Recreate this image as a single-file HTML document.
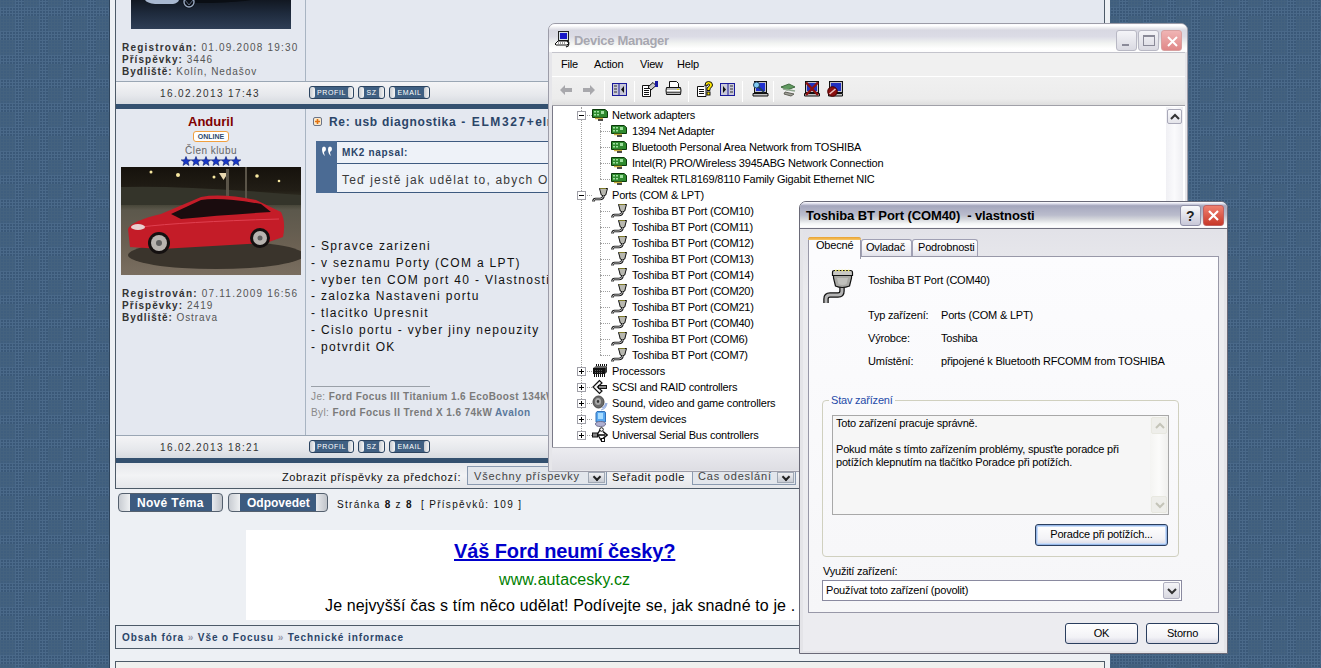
<!DOCTYPE html>
<html><head><meta charset="utf-8">
<style>
*{margin:0;padding:0;box-sizing:border-box}
html,body{width:1321px;height:668px;overflow:hidden}
body{position:relative;font-family:"Liberation Sans",sans-serif;
background-color:#3a5878;
background-image:
 repeating-linear-gradient(90deg,rgba(90,118,150,.32) 0 1px,transparent 1px 3px),
 repeating-linear-gradient(0deg,rgba(90,118,150,.32) 0 1px,transparent 1px 3px);
}
.a{position:absolute}
.t{position:absolute;white-space:nowrap;line-height:1}
#forum{left:109px;top:0;width:1001px;height:668px;background:#edf0f4;border-left:1px solid #2c435c}
.post{background:#e4e8f0}
.daterow{background:linear-gradient(#f4f4f6,#e6e8ec 60%,#d6dae0)}
.bar{background:#33506f}
.ui{font-size:10px;color:#333}
.b{font-weight:bold}
.ui b{color:#333}
.pbtn{position:absolute;height:13px;background:#3f5f82;border-radius:3px;border:1px solid #2c4460;color:#fff;font-size:7px;font-weight:normal;text-align:center;line-height:11px;letter-spacing:.6px}
.pbtn:before,.pbtn:after{content:"";position:absolute;top:0;width:5px;height:11px;background:linear-gradient(90deg,#c8ccd2,#f4f4f4);border-radius:2px}
.pbtn:before{left:0}.pbtn:after{right:0}

.xp{font-size:11px;color:#000;letter-spacing:-.2px}
.tb{width:21px;height:21px;border:1px solid #b8b8c4;border-radius:3px;background:linear-gradient(#f4f4f8,#dadae2)}
.tb i{position:absolute;display:block}
.tb.cl{background:linear-gradient(#f0b4b4,#e08888);border-color:#d8a0a0}
.dv{width:1px;border-left:1px dotted #a0a0a0}
.dh{height:1px;border-top:1px dotted #a0a0a0}
.exb{width:9px;height:9px;border:1px solid #a0a0a8;background:#fff}
.exb i{position:absolute;left:1px;top:3px;width:5px;height:1px;background:#000}
.exb b{position:absolute;left:3px;top:1px;width:1px;height:5px;background:#000}
.sep{width:1px;height:21px;background:#c0c0c8;border-right:1px solid #fff}

.tab{border:1px solid #a0a0b4;border-bottom:0;border-radius:3px 3px 0 0;background:linear-gradient(#fefefe,#f0f0f4 60%,#dcdce6)}
.hp{background:linear-gradient(#fafafc,#c8c8d8);border-color:#9090a8}
.cl2{background:linear-gradient(#f08070,#c83828);border-color:#c06060}
.btn{border:1px solid #2a3e5e;border-radius:3px;background:linear-gradient(#fff,#f2f2f6 70%,#d8d8e4)}
.btn span{position:absolute;left:0;right:0;top:4px;text-align:center;font-size:11px;letter-spacing:-.2px;color:#000;line-height:11px;white-space:nowrap}
.btn.def{box-shadow:inset 0 0 0 1px #98b8e8, inset 0 0 0 2px #c8dcf8}
.sdd{width:17px;height:11px;border:1px solid #a0a8b4;background:linear-gradient(#f0f0f2,#c8ccd4)}
.sdd:after{content:"";position:absolute;left:5px;top:1px;width:4px;height:4px;border-right:2px solid #222;border-bottom:2px solid #222;transform:rotate(45deg)}
</style></head><body>

<svg class="a" style="left:0;top:0" width="1321" height="668"><defs><pattern id="bgp" width="24" height="24" patternUnits="userSpaceOnUse" x="0" y="1"><rect x="0" y="0" width="3" height="3" fill="#44627f"/><rect x="1" y="1" width="2" height="2" fill="#3f5e7e"/><rect x="0" y="3" width="3" height="3" fill="#44627f"/><rect x="1" y="4" width="2" height="2" fill="#3f5e7e"/><rect x="0" y="6" width="3" height="3" fill="#4a6989"/><rect x="1" y="7" width="2" height="2" fill="#3a5878"/><rect x="0" y="9" width="3" height="3" fill="#4a6989"/><rect x="1" y="10" width="2" height="2" fill="#3a5878"/><rect x="0" y="12" width="3" height="3" fill="#4a6989"/><rect x="1" y="13" width="2" height="2" fill="#3a5878"/><rect x="0" y="15" width="3" height="3" fill="#44627f"/><rect x="1" y="16" width="2" height="2" fill="#3f5e7e"/><rect x="0" y="18" width="3" height="3" fill="#44627f"/><rect x="1" y="19" width="2" height="2" fill="#3f5e7e"/><rect x="0" y="21" width="3" height="3" fill="#44627f"/><rect x="1" y="22" width="2" height="2" fill="#3f5e7e"/><rect x="3" y="0" width="3" height="3" fill="#44627f"/><rect x="4" y="1" width="2" height="2" fill="#3f5e7e"/><rect x="3" y="3" width="3" height="3" fill="#44627f"/><rect x="4" y="4" width="2" height="2" fill="#3f5e7e"/><rect x="3" y="6" width="3" height="3" fill="#4a6989"/><rect x="4" y="7" width="2" height="2" fill="#3a5878"/><rect x="3" y="9" width="3" height="3" fill="#4a6989"/><rect x="4" y="10" width="2" height="2" fill="#3a5878"/><rect x="3" y="12" width="3" height="3" fill="#4a6989"/><rect x="4" y="13" width="2" height="2" fill="#3a5878"/><rect x="3" y="15" width="3" height="3" fill="#44627f"/><rect x="4" y="16" width="2" height="2" fill="#3f5e7e"/><rect x="3" y="18" width="3" height="3" fill="#44627f"/><rect x="4" y="19" width="2" height="2" fill="#3f5e7e"/><rect x="3" y="21" width="3" height="3" fill="#44627f"/><rect x="4" y="22" width="2" height="2" fill="#3f5e7e"/><rect x="6" y="0" width="3" height="3" fill="#44627f"/><rect x="7" y="1" width="2" height="2" fill="#3f5e7e"/><rect x="6" y="3" width="3" height="3" fill="#44627f"/><rect x="7" y="4" width="2" height="2" fill="#3f5e7e"/><rect x="6" y="6" width="3" height="3" fill="#4a6989"/><rect x="7" y="7" width="2" height="2" fill="#3a5878"/><rect x="6" y="9" width="3" height="3" fill="#4a6989"/><rect x="7" y="10" width="2" height="2" fill="#3a5878"/><rect x="6" y="12" width="3" height="3" fill="#4a6989"/><rect x="7" y="13" width="2" height="2" fill="#3a5878"/><rect x="6" y="15" width="3" height="3" fill="#44627f"/><rect x="7" y="16" width="2" height="2" fill="#3f5e7e"/><rect x="6" y="18" width="3" height="3" fill="#44627f"/><rect x="7" y="19" width="2" height="2" fill="#3f5e7e"/><rect x="6" y="21" width="3" height="3" fill="#44627f"/><rect x="7" y="22" width="2" height="2" fill="#3f5e7e"/><rect x="9" y="0" width="3" height="3" fill="#44627f"/><rect x="10" y="1" width="2" height="2" fill="#3f5e7e"/><rect x="9" y="3" width="3" height="3" fill="#44627f"/><rect x="10" y="4" width="2" height="2" fill="#3f5e7e"/><rect x="9" y="6" width="3" height="3" fill="#4a6989"/><rect x="10" y="7" width="2" height="2" fill="#3a5878"/><rect x="9" y="9" width="3" height="3" fill="#4a6989"/><rect x="10" y="10" width="2" height="2" fill="#3a5878"/><rect x="9" y="12" width="3" height="3" fill="#4a6989"/><rect x="10" y="13" width="2" height="2" fill="#3a5878"/><rect x="9" y="15" width="3" height="3" fill="#44627f"/><rect x="10" y="16" width="2" height="2" fill="#3f5e7e"/><rect x="9" y="18" width="3" height="3" fill="#44627f"/><rect x="10" y="19" width="2" height="2" fill="#3f5e7e"/><rect x="9" y="21" width="3" height="3" fill="#44627f"/><rect x="10" y="22" width="2" height="2" fill="#3f5e7e"/><rect x="12" y="0" width="3" height="3" fill="#44627f"/><rect x="13" y="1" width="2" height="2" fill="#3f5e7e"/><rect x="12" y="3" width="3" height="3" fill="#44627f"/><rect x="13" y="4" width="2" height="2" fill="#3f5e7e"/><rect x="12" y="6" width="3" height="3" fill="#4a6989"/><rect x="13" y="7" width="2" height="2" fill="#3a5878"/><rect x="12" y="9" width="3" height="3" fill="#4a6989"/><rect x="13" y="10" width="2" height="2" fill="#3a5878"/><rect x="12" y="12" width="3" height="3" fill="#4a6989"/><rect x="13" y="13" width="2" height="2" fill="#3a5878"/><rect x="12" y="15" width="3" height="3" fill="#44627f"/><rect x="13" y="16" width="2" height="2" fill="#3f5e7e"/><rect x="12" y="18" width="3" height="3" fill="#44627f"/><rect x="13" y="19" width="2" height="2" fill="#3f5e7e"/><rect x="12" y="21" width="3" height="3" fill="#44627f"/><rect x="13" y="22" width="2" height="2" fill="#3f5e7e"/><rect x="15" y="0" width="3" height="3" fill="#4a6989"/><rect x="16" y="1" width="2" height="2" fill="#3a5878"/><rect x="15" y="3" width="3" height="3" fill="#4a6989"/><rect x="16" y="4" width="2" height="2" fill="#3a5878"/><rect x="15" y="6" width="3" height="3" fill="#4a6989"/><rect x="16" y="7" width="2" height="2" fill="#3a5878"/><rect x="15" y="9" width="3" height="3" fill="#4a6989"/><rect x="16" y="10" width="2" height="2" fill="#3a5878"/><rect x="15" y="12" width="3" height="3" fill="#4a6989"/><rect x="16" y="13" width="2" height="2" fill="#3a5878"/><rect x="15" y="15" width="3" height="3" fill="#4a6989"/><rect x="16" y="16" width="2" height="2" fill="#3a5878"/><rect x="15" y="18" width="3" height="3" fill="#4a6989"/><rect x="16" y="19" width="2" height="2" fill="#3a5878"/><rect x="15" y="21" width="3" height="3" fill="#4a6989"/><rect x="16" y="22" width="2" height="2" fill="#3a5878"/><rect x="18" y="0" width="3" height="3" fill="#4a6989"/><rect x="19" y="1" width="2" height="2" fill="#3a5878"/><rect x="18" y="3" width="3" height="3" fill="#4a6989"/><rect x="19" y="4" width="2" height="2" fill="#3a5878"/><rect x="18" y="6" width="3" height="3" fill="#4a6989"/><rect x="19" y="7" width="2" height="2" fill="#3a5878"/><rect x="18" y="9" width="3" height="3" fill="#4a6989"/><rect x="19" y="10" width="2" height="2" fill="#3a5878"/><rect x="18" y="12" width="3" height="3" fill="#4a6989"/><rect x="19" y="13" width="2" height="2" fill="#3a5878"/><rect x="18" y="15" width="3" height="3" fill="#4a6989"/><rect x="19" y="16" width="2" height="2" fill="#3a5878"/><rect x="18" y="18" width="3" height="3" fill="#4a6989"/><rect x="19" y="19" width="2" height="2" fill="#3a5878"/><rect x="18" y="21" width="3" height="3" fill="#4a6989"/><rect x="19" y="22" width="2" height="2" fill="#3a5878"/><rect x="21" y="0" width="3" height="3" fill="#4a6989"/><rect x="22" y="1" width="2" height="2" fill="#3a5878"/><rect x="21" y="3" width="3" height="3" fill="#4a6989"/><rect x="22" y="4" width="2" height="2" fill="#3a5878"/><rect x="21" y="6" width="3" height="3" fill="#4a6989"/><rect x="22" y="7" width="2" height="2" fill="#3a5878"/><rect x="21" y="9" width="3" height="3" fill="#4a6989"/><rect x="22" y="10" width="2" height="2" fill="#3a5878"/><rect x="21" y="12" width="3" height="3" fill="#4a6989"/><rect x="22" y="13" width="2" height="2" fill="#3a5878"/><rect x="21" y="15" width="3" height="3" fill="#4a6989"/><rect x="22" y="16" width="2" height="2" fill="#3a5878"/><rect x="21" y="18" width="3" height="3" fill="#4a6989"/><rect x="22" y="19" width="2" height="2" fill="#3a5878"/><rect x="21" y="21" width="3" height="3" fill="#4a6989"/><rect x="22" y="22" width="2" height="2" fill="#3a5878"/></pattern></defs><rect width="1321" height="668" fill="url(#bgp)"/></svg>
<!-- forum container -->
<div class="a" id="forum"></div>
<!-- table outer -->
<div class="a" style="left:115px;top:0;width:990px;height:463px;border-left:1px solid #4d5a68;border-right:1px solid #4d5a68"></div>

<!-- post 1 -->
<div class="a post" style="left:116px;top:0;width:988px;height:81px"></div>
<div class="a" style="left:305px;top:0;width:1px;height:104px;background:#a8b4c2"></div>
<svg class="a" style="left:131px;top:0" width="160" height="29" viewBox="0 0 160 29"><defs><linearGradient id="g1" x1="0" y1="0" x2="0" y2="1"><stop offset="0" stop-color="#121822"/><stop offset=".45" stop-color="#1e2a3c"/><stop offset="1" stop-color="#2e3e56"/></linearGradient></defs><rect width="160" height="29" fill="url(#g1)"/><path d="M14 0 H48 Q47 3 42 4 H24 Q16 3 14 0Z" fill="#a8b8d0"/><path d="M60 0 H120 Q110 2 80 3 H62Z" fill="#0a0e14"/><circle cx="58" cy="2" r="6.5" fill="#0c1018"/><circle cx="58" cy="2" r="5" fill="none" stroke="#98a8c0" stroke-width="1.4"/><path d="M54 0 L58 5 L62 0" fill="none" stroke="#7888a0" stroke-width=".8"/></svg>
<div class="t ui" style="left:122px;top:43px;color:#555;letter-spacing:1.2px"><b>Registrován:</b> 01.09.2008 19:30</div>
<div class="t ui" style="left:122px;top:55px;color:#555;letter-spacing:1.03px"><b>Příspěvky:</b> 3446</div>
<div class="t ui" style="left:122px;top:67px;color:#555;letter-spacing:.93px"><b>Bydliště:</b> Kolín, Nedašov</div>
<div class="a" style="left:116px;top:81px;width:988px;height:1px;background:#9aa6b4"></div>
<div class="a daterow" style="left:116px;top:82px;width:988px;height:22px"></div>
<div class="t ui" style="left:160px;top:89px;letter-spacing:1.38px">16.02.2013 17:43</div>
<div class="pbtn" style="left:309px;top:86px;width:45px">PROFIL</div>
<div class="pbtn" style="left:358px;top:86px;width:27px">SZ</div>
<div class="pbtn" style="left:389px;top:86px;width:41px">EMAIL</div>
<div class="a bar" style="left:116px;top:104px;width:988px;height:5px"></div>

<!-- post 2 -->
<div class="a post" style="left:116px;top:109px;width:988px;height:326px"></div>
<div class="a" style="left:305px;top:109px;width:1px;height:349px;background:#a8b4c2"></div>
<div class="t b" style="left:188px;top:115px;font-size:13px;color:#800000">Anduril</div>
<div class="a" style="left:193px;top:131px;width:36px;height:11px;border:1px solid #f0a040;border-radius:3px;background:#fff;font-size:7px;font-weight:bold;color:#2c4a6e;text-align:center;line-height:9px">ONLINE</div>
<div class="t ui" style="left:185px;top:146px;color:#666;letter-spacing:.47px">Člen klubu</div>
<svg class="a" style="left:181px;top:156px" width="60" height="11" viewBox="0 0 60 11"><path transform="translate(0,0)" d="M5 .5 L6.3 3.8 L9.8 3.9 L7 6 L8 9.5 L5 7.5 L2 9.5 L3 6 L.2 3.9 L3.7 3.8Z" fill="#1838c8" stroke="#0a1c70" stroke-width=".6"/><path transform="translate(10,0)" d="M5 .5 L6.3 3.8 L9.8 3.9 L7 6 L8 9.5 L5 7.5 L2 9.5 L3 6 L.2 3.9 L3.7 3.8Z" fill="#1838c8" stroke="#0a1c70" stroke-width=".6"/><path transform="translate(20,0)" d="M5 .5 L6.3 3.8 L9.8 3.9 L7 6 L8 9.5 L5 7.5 L2 9.5 L3 6 L.2 3.9 L3.7 3.8Z" fill="#1838c8" stroke="#0a1c70" stroke-width=".6"/><path transform="translate(30,0)" d="M5 .5 L6.3 3.8 L9.8 3.9 L7 6 L8 9.5 L5 7.5 L2 9.5 L3 6 L.2 3.9 L3.7 3.8Z" fill="#1838c8" stroke="#0a1c70" stroke-width=".6"/><path transform="translate(40,0)" d="M5 .5 L6.3 3.8 L9.8 3.9 L7 6 L8 9.5 L5 7.5 L2 9.5 L3 6 L.2 3.9 L3.7 3.8Z" fill="#1838c8" stroke="#0a1c70" stroke-width=".6"/><path transform="translate(50,0)" d="M5 .5 L6.3 3.8 L9.8 3.9 L7 6 L8 9.5 L5 7.5 L2 9.5 L3 6 L.2 3.9 L3.7 3.8Z" fill="#1838c8" stroke="#0a1c70" stroke-width=".6"/></svg>
<svg class="a" style="left:121px;top:167px" width="180" height="108" viewBox="0 0 180 108"><defs><linearGradient id="g2" x1="0" y1="0" x2="0" y2="1"><stop offset="0" stop-color="#16120c"/><stop offset=".22" stop-color="#221e16"/><stop offset=".32" stop-color="#3a3a2c"/><stop offset=".4" stop-color="#5c584c"/><stop offset=".7" stop-color="#6a6052"/><stop offset="1" stop-color="#7a6e60"/></linearGradient></defs>
<rect width="180" height="108" fill="url(#g2)"/>
<path d="M0 20 Q60 18 180 28 V38 H0Z" fill="#34342a"/>
<circle cx="30" cy="5" r="1.5" fill="#f8e8a0"/><circle cx="57" cy="8" r="2" fill="#f8e8a0"/><circle cx="93" cy="10" r="1.5" fill="#f8e8a0"/><circle cx="136" cy="9" r="1.8" fill="#f8e8a0"/><circle cx="158" cy="14" r="1.3" fill="#f8e8a0"/>
<path d="M98 6 h9 l-4.5 7z" fill="#e8d8b0"/><rect x="105" y="2" width="3" height="28" fill="#5a5448"/><rect x="124" y="0" width="2" height="32" fill="#5a5448"/>
<ellipse cx="95" cy="88" rx="88" ry="14" fill="#3a342c"/>
<path d="M7 62 Q10 54 40 47 L80 30 Q100 26 135 33 L160 45 Q165 55 162 70 L145 76 L40 82 L9 80Z" fill="#c41c28"/>
<path d="M50 47 L80 33 Q100 30 140 37 L150 45 Q100 48 60 52Z" fill="#1a0c0e"/>
<path d="M20 60 Q60 55 158 52" stroke="#e04050" stroke-width="1" fill="none"/>
<circle cx="38" cy="76" r="11" fill="#141010"/><circle cx="38" cy="76" r="8" fill="#b8b4b0"/><circle cx="38" cy="76" r="3" fill="#606060"/>
<circle cx="139" cy="71" r="10" fill="#141010"/><circle cx="139" cy="71" r="7" fill="#b8b4b0"/><circle cx="139" cy="71" r="2.5" fill="#606060"/>
<ellipse cx="17" cy="60" rx="7" ry="3" fill="#e8d0d0"/></svg>
<div class="t ui" style="left:122px;top:289px;color:#555;letter-spacing:1.22px"><b>Registrován:</b> 07.11.2009 16:56</div>
<div class="t ui" style="left:122px;top:301px;color:#555;letter-spacing:1.05px"><b>Příspěvky:</b> 2419</div>
<div class="t ui" style="left:122px;top:313px;color:#555;letter-spacing:.94px"><b>Bydliště:</b> Ostrava</div>

<svg class="a" style="left:313px;top:117px" width="9" height="9" viewBox="0 0 9 9"><rect x=".5" y=".5" width="8" height="8" rx="1.5" fill="#fbe8c8" stroke="#6a7488"/><path d="M4.5 2 V7 M2 4.5 H7" stroke="#e07010" stroke-width="1.6"/></svg>
<div class="t b" style="left:329px;top:116px;font-size:12px;color:#2b4568;letter-spacing:.7px">Re: usb diagnostika<span style="letter-spacing:1.6px"> - ELM327+</span>elm327</div>
<div class="a" style="left:316px;top:141px;width:300px;height:52px;border:1px solid #3d5a80;background:#eef2f8"></div>
<div class="a" style="left:316px;top:141px;width:21px;height:52px;background:#4b6b94"></div>
<svg class="a" style="left:321px;top:146px" width="12" height="11" viewBox="0 0 12 11"><path d="M1 3 Q1 .5 3 .5 Q5 .5 5 3 Q5 5 3 6 Q3 8 4 10 Q1 8 1 3Z" fill="#fff"/><path d="M7 3 Q7 .5 9 .5 Q11 .5 11 3 Q11 5 9 6 Q9 8 10 10 Q7 8 7 3Z" fill="#fff"/></svg>
<div class="a" style="left:337px;top:163px;width:300px;height:1px;background:#3d5a80"></div>
<div class="t b" style="left:342px;top:148px;font-size:10px;color:#2b4568;letter-spacing:.65px">MK2 napsal:</div>
<div class="t" style="left:342px;top:174px;font-size:12px;color:#3a3a3a;letter-spacing:1.2px">Teď jestě jak udělat to, abych OB</div>

<div class="a" style="left:311px;top:238px;font-size:12px;line-height:16.8px;color:#111;white-space:nowrap;letter-spacing:1.33px">- Spravce zarizeni<br>- v seznamu Porty (COM a LPT)<br>- vyber ten COM port 40 - Vlastnosti<br>- zalozka Nastaveni portu<br>- tlacitko Upresnit<br>- Cislo portu - vyber jiny nepouzity<br>- potvrdit OK</div>
<div class="a" style="left:311px;top:386px;width:119px;height:1px;background:#9aa0a8"></div>
<div class="t" style="left:311px;top:392px;font-size:10px;color:#8a8a8a;letter-spacing:.4px">Je: <b style="color:#7a7a7a">Ford Focus III Titanium 1.6 EcoBoost 134kW</b></div>
<div class="t" style="left:311px;top:408px;font-size:10px;color:#8a8a8a;letter-spacing:.4px">Byl: <b style="color:#7a7a7a">Ford Focus II Trend X 1.6 74kW <span style="color:#5a789c">Avalon</span></b></div>

<div class="a" style="left:116px;top:435px;width:988px;height:1px;background:#9aa6b4"></div>
<div class="a daterow" style="left:116px;top:436px;width:988px;height:22px"></div>
<div class="t ui" style="left:160px;top:443px;letter-spacing:1.38px">16.02.2013 18:21</div>
<div class="pbtn" style="left:309px;top:440px;width:45px">PROFIL</div>
<div class="pbtn" style="left:358px;top:440px;width:27px">SZ</div>
<div class="pbtn" style="left:389px;top:440px;width:41px">EMAIL</div>
<div class="a bar" style="left:116px;top:458px;width:988px;height:5px"></div>

<!-- toolbar -->
<div class="a" style="left:115px;top:463px;width:990px;height:26px;border:1px solid #4d5a68;border-top:0;background:linear-gradient(#e6e8ec,#f2f3f5 50%,#e4e6ea)"></div>
<div class="t" style="left:282px;top:472px;font-size:11px;color:#111;letter-spacing:.63px">Zobrazit příspěvky za předchozí:</div>
<div class="a" style="left:467px;top:466px;width:140px;height:19px;border:1px solid #8a9ab0;background:#e2e6ec"></div>
<div class="t" style="left:474px;top:471px;font-size:11px;color:#444;letter-spacing:.8px">Všechny příspevky</div>
<div class="a sdd" style="left:588px;top:472px"></div>
<div class="t" style="left:612px;top:472px;font-size:11px;color:#111;letter-spacing:.63px">Seřadit podle</div>
<div class="a" style="left:692px;top:466px;width:104px;height:19px;border:1px solid #8a9ab0;background:#e2e6ec"></div>
<div class="t" style="left:698px;top:471px;font-size:11px;color:#444;letter-spacing:.8px">Čas odeslání</div>
<div class="a sdd" style="left:777px;top:472px"></div>

<!-- buttons -->
<div class="a" style="left:118px;top:493px;width:105px;height:19px;border:1px solid #54606e;border-radius:4px;background:linear-gradient(90deg,#c8ccd2,#eef0f2 11px,#3d5b7f 11px 93px,#e8eaee 93px,#c0c4ca)"></div>
<div class="t b" style="left:137px;top:497px;font-size:12px;color:#fff;letter-spacing:.3px">Nové Téma</div>
<div class="a" style="left:228px;top:493px;width:100px;height:19px;border:1px solid #54606e;border-radius:4px;background:linear-gradient(90deg,#c8ccd2,#eef0f2 11px,#3d5b7f 11px 87px,#e8eaee 87px,#c0c4ca)"></div>
<div class="t b" style="left:247px;top:497px;font-size:12px;color:#fff;letter-spacing:0px">Odpovedet</div>
<div class="t" style="left:337px;top:500px;font-size:10px;color:#111;letter-spacing:1.3px">Stránka <b>8</b> z <b>8</b> &nbsp;[ Příspěvků: 109 ]</div>

<!-- ad -->
<div class="a" style="left:246px;top:530px;width:640px;height:90px;background:#fff"></div>
<div class="t b" style="left:454px;top:541px;font-size:20px;color:#0000cc;text-decoration:underline;letter-spacing:-.1px">Váš Ford neumí česky?</div>
<div class="t" style="left:499px;top:572px;font-size:16px;color:#008000;letter-spacing:.1px">www.autacesky.cz</div>
<div class="t" style="left:325px;top:598px;font-size:16px;color:#000;letter-spacing:.13px">Je nejvyšší čas s tím něco udělat! Podívejte se, jak snadné to je .</div>

<!-- breadcrumb -->
<div class="a" style="left:115px;top:625px;width:990px;height:24px;border:1px solid #4d5a68;background:#e8ecf2"></div>
<div class="t b" style="left:122px;top:633px;font-size:10px;color:#2b4568;letter-spacing:.92px">Obsah fóra <span style="color:#99a">»</span> Vše o Focusu <span style="color:#99a">»</span> Technické informace</div>
<div class="a" style="left:115px;top:661px;width:990px;height:10px;border:1px solid #4d5a68;background:#f0f0ee"></div>


<!-- ============ DEVICE MANAGER ============ -->
<div class="a" id="dm" style="left:548px;top:23px;width:640px;height:449px;border:1px solid #9c9ca8;border-radius:7px 7px 0 0;background:#e6e6ea;overflow:hidden">
 <div class="a" style="left:0;top:0;width:638px;height:28px;background:linear-gradient(#fafafe,#ffffff 6%,#d8d8e2 22%,#dcdce6 45%,#f2f4f2 70%,#ffffff 88%,#fdfdfd)"></div>
 <svg class="a" style="left:5px;top:7px" width="17" height="17" viewBox="0 0 17 17">
  <rect x="4.5" y="0.5" width="10" height="9" fill="#d8e0e8" stroke="#222"/><rect x="6" y="2" width="7" height="6" fill="#1818c8"/>
  <path d="M1 13 L4 10 H14 L15 12 L13 14 H2 Z" fill="#fff" stroke="#111"/><path d="M4 12 h8" stroke="#444" stroke-dasharray="1 1"/>
  <path d="M13 10 q3 2 1 5 l-2 1" fill="none" stroke="#111" stroke-width="1.2"/>
 </svg>
 <div class="t b" style="left:25px;top:10px;font-size:13px;color:#a7a7b0;letter-spacing:-.3px">Device Manager</div>
 <div class="a tb" style="left:567px;top:6px"><i style="left:5px;top:13px;width:7px;height:2px;background:#8a8a98"></i></div>
 <div class="a tb" style="left:589px;top:6px"><i style="left:4px;top:4px;width:12px;height:11px;border:1px solid #8a8a98;border-top-width:2px"></i></div>
 <div class="a tb cl" style="left:612px;top:6px"><svg class="a" style="left:4px;top:4px" width="13" height="13"><path d="M2 2 L11 11 M11 2 L2 11" stroke="#fff" stroke-width="2"/></svg></div>
 <!-- menubar -->
 <div class="a" style="left:3px;top:28px;width:633px;height:24px;background:#f0f0f0;border-top:1px solid #c4c4cc"></div>
 <div class="t xp" style="left:12px;top:35px">File</div>
 <div class="t xp" style="left:45px;top:35px">Action</div>
 <div class="t xp" style="left:91px;top:35px">View</div>
 <div class="t xp" style="left:128px;top:35px">Help</div>
 <div class="a" style="left:3px;top:52px;width:633px;height:1px;background:#fff"></div>
 <!-- toolbar -->
 <div class="a" style="left:3px;top:53px;width:633px;height:29px;background:linear-gradient(#f0f0f0,#ececec 75%,#dcdcdc)"></div>
 <div class="a" style="left:3px;top:81px;width:633px;height:1px;background:#a0a0a8"></div>
 <div class="a sep" style="left:55px;top:57px"></div>
 <div class="a sep" style="left:85px;top:57px"></div>
 <div class="a sep" style="left:139px;top:57px"></div>
 <div class="a sep" style="left:193px;top:57px"></div>
 <div class="a sep" style="left:224px;top:57px"></div>
 <svg class="a" style="left:10px;top:59px" width="14" height="14"><path d="M1 7 L6 2 V5 H13 V9 H6 V12 Z" fill="#a8a8ac"/></svg>
 <svg class="a" style="left:33px;top:59px" width="14" height="14"><path d="M13 7 L8 2 V5 H1 V9 H8 V12 Z" fill="#a8a8ac"/></svg>
 <svg class="a" style="left:63px;top:59px" width="16" height="14"><rect x="0.5" y="0.5" width="14" height="12" fill="#c8c8d8" stroke="#1a1a9a"/><path d="M2 3h3M2 6h3M2 9h3" stroke="#333"/><path d="M7 1v11" stroke="#1a1a9a"/><path d="M12 3 L9 6.5 L12 10Z" fill="#111"/></svg>
 <svg class="a" style="left:93px;top:57px" width="18" height="16" viewBox="0 0 18 16"><path d="M0.5 4.5 H8.5 V15.5 H0.5Z" fill="#fff" stroke="#111"/><path d="M2 7.5h5M2 9.5h5M2 11.5h5M2 13.5h5" stroke="#111"/><path d="M6 6 L11 1.5 L14 4.5 L9 9Z" fill="#c8c8c8" stroke="#111"/><rect x="13" y="0" width="3" height="6" fill="#1a1aa0"/></svg>
 <svg class="a" style="left:116px;top:57px" width="17" height="16" viewBox="0 0 17 16"><path d="M4.5 0.5 H11.5 L13.5 2.5 V6.5 H4.5Z" fill="#fff" stroke="#111"/><path d="M1.5 6.5 H15.5 Q16.5 9 15.5 13.5 H1.5 Q0.5 9 1.5 6.5Z" fill="#b8b8b8" stroke="#111"/><path d="M2 9.5h13" stroke="#fff"/><path d="M2 11.5h13" stroke="#555"/><rect x="12" y="8" width="2" height="1" fill="#e8d800"/></svg>
 <svg class="a" style="left:148px;top:57px" width="17" height="16" viewBox="0 0 17 16"><path d="M0.5 5.5 H7 L9 3.5 V15.5 H0.5Z" fill="#fff" stroke="#111"/><path d="M2 8.5h5M2 10.5h5M2 12.5h5" stroke="#111"/><path d="M8 4 Q8 0.5 11.5 0.5 Q15.5 0.5 15.5 4 Q15.5 6 13 7.5 V9.5 H10 V7 Q12.5 5.5 12.5 4 Q12.5 3 11.5 3 Q10.5 3 10.5 4.5Z" fill="#ffe800" stroke="#111"/><rect x="10" y="11" width="3" height="3" fill="#ffe800" stroke="#111"/></svg>
 <svg class="a" style="left:171px;top:59px" width="16" height="14"><rect x="0.5" y="0.5" width="14" height="12" fill="#c8c8d8" stroke="#1a1a9a"/><path d="M10 3h3M10 6h3M10 9h3" stroke="#333"/><path d="M8 1v11" stroke="#1a1a9a"/><path d="M3 3 L6 6.5 L3 10Z" fill="#111"/></svg>
 <svg class="a" style="left:203px;top:57px" width="17" height="16" viewBox="0 0 17 16"><rect x="2.5" y="0.5" width="12" height="11" fill="#c0c0c8" stroke="#111"/><rect x="4" y="2" width="9" height="8" fill="#2030d0"/><path d="M1 12.5 H16 V15 H1Z" fill="#c0c0c0" stroke="#111"/><circle cx="4.5" cy="4" r="3" fill="#80c8f0" stroke="#204060"/><path d="M6.5 6 L12 11" stroke="#204060" stroke-width="1.8"/></svg>
 <svg class="a" style="left:231px;top:58px" width="17" height="15" viewBox="0 0 17 15"><path d="M1 5 L9 2 L15 5 L7 8Z" fill="#609a60" stroke="#406a40"/><path d="M3 7 L15 9" stroke="#90a890" stroke-width="1.5"/><path d="M5 10 L14 12 L11 14 L4 12Z" fill="#a0a098" stroke="#606058"/></svg>
 <svg class="a" style="left:255px;top:57px" width="16" height="16" viewBox="0 0 16 16"><rect x="1.5" y="0.5" width="13" height="11" fill="#c0c0c8" stroke="#111"/><rect x="3" y="2" width="10" height="8" fill="#2030c0"/><path d="M0.5 12.5 H15.5 V15 H0.5Z" fill="#c0c0c0" stroke="#111"/><path d="M2 1.5 L14 14 M14 1.5 L2 14" stroke="#8a1010" stroke-width="2.4"/></svg>
 <svg class="a" style="left:278px;top:57px" width="16" height="16" viewBox="0 0 16 16"><rect x="2.5" y="0.5" width="13" height="11" fill="#c0c0c8" stroke="#111"/><rect x="4" y="2" width="10" height="8" fill="#2030c0"/><path d="M1.5 12.5 H15.5 V15 H1.5Z" fill="#c0c0c0" stroke="#111"/><circle cx="5.5" cy="10.5" r="4.8" fill="#8a1010" stroke="#400"/><path d="M2.5 13 L8.5 8" stroke="#f0c0c0" stroke-width="1.6"/></svg>
 <!-- tree -->
 <div class="a" style="left:3px;top:82px;width:633px;height:341px;background:#fff;border-left:1px solid #7a7a88"></div>
 <div class="a" style="left:617px;top:83px;width:17px;height:340px;background:linear-gradient(90deg,#f0f0f4,#fafafc 50%,#eeeef2)"></div>
 <div class="a" style="left:618px;top:85px;width:15px;height:15px;border:1px solid #a8a8b8;border-radius:2px;background:linear-gradient(#fafafc,#e4e4ea)"><svg class="a" style="left:2px;top:3px" width="10" height="7"><path d="M1 6 L5 2 L9 6" fill="none" stroke="#333" stroke-width="2"/></svg></div>
 <div class="a" id="tree" style="left:0;top:83px;width:617px;height:340px;overflow:hidden"><div class="a dv" style="left:32px;top:0;height:328px"></div>
<div class="a dv" style="left:51px;top:16px;height:56px"></div>
<div class="a dv" style="left:51px;top:96px;height:152px"></div>
<div class="a dh" style="left:32px;top:8px;width:11px"></div>
<div class="a exb" style="left:28px;top:4px"><i></i></div>
<div class="a" style="left:43px;top:0px;width:16px;height:16px"><svg width="16" height="16" viewBox="0 0 16 16"><path d="M0.5 2.5 H13 L15.5 4.5 V10.5 H0.5Z" fill="#2e8a2e" stroke="#0a3a0a"/><path d="M2 4h2v1.5h-2zM2 7h2v1.5h-2zM5 4h2v1.5h-2zM5 7h2v1.5h-2zM9 4h3v3h-3z" fill="#9ee09e"/><path d="M3 11.5h8" stroke="#c8b040" stroke-width="1.5"/><path d="M6 13h5" stroke="#111" stroke-width="1.5"/></svg></div>
<div class="t xp" style="left:63px;top:0px;line-height:16px">Network adapters</div>
<div class="a dh" style="left:51px;top:24px;width:10px"></div>
<div class="a" style="left:62px;top:16px;width:16px;height:16px"><svg width="16" height="16" viewBox="0 0 16 16"><path d="M0.5 2.5 H13 L15.5 4.5 V10.5 H0.5Z" fill="#2e8a2e" stroke="#0a3a0a"/><path d="M2 4h2v1.5h-2zM2 7h2v1.5h-2zM5 4h2v1.5h-2zM5 7h2v1.5h-2zM9 4h3v3h-3z" fill="#9ee09e"/><path d="M3 11.5h8" stroke="#c8b040" stroke-width="1.5"/><path d="M6 13h5" stroke="#111" stroke-width="1.5"/></svg></div>
<div class="t xp" style="left:83px;top:16px;line-height:16px">1394 Net Adapter</div>
<div class="a dh" style="left:51px;top:40px;width:10px"></div>
<div class="a" style="left:62px;top:32px;width:16px;height:16px"><svg width="16" height="16" viewBox="0 0 16 16"><path d="M0.5 2.5 H13 L15.5 4.5 V10.5 H0.5Z" fill="#2e8a2e" stroke="#0a3a0a"/><path d="M2 4h2v1.5h-2zM2 7h2v1.5h-2zM5 4h2v1.5h-2zM5 7h2v1.5h-2zM9 4h3v3h-3z" fill="#9ee09e"/><path d="M3 11.5h8" stroke="#c8b040" stroke-width="1.5"/><path d="M6 13h5" stroke="#111" stroke-width="1.5"/></svg></div>
<div class="t xp" style="left:83px;top:32px;line-height:16px">Bluetooth Personal Area Network from TOSHIBA</div>
<div class="a dh" style="left:51px;top:56px;width:10px"></div>
<div class="a" style="left:62px;top:48px;width:16px;height:16px"><svg width="16" height="16" viewBox="0 0 16 16"><path d="M0.5 2.5 H13 L15.5 4.5 V10.5 H0.5Z" fill="#2e8a2e" stroke="#0a3a0a"/><path d="M2 4h2v1.5h-2zM2 7h2v1.5h-2zM5 4h2v1.5h-2zM5 7h2v1.5h-2zM9 4h3v3h-3z" fill="#9ee09e"/><path d="M3 11.5h8" stroke="#c8b040" stroke-width="1.5"/><path d="M6 13h5" stroke="#111" stroke-width="1.5"/></svg></div>
<div class="t xp" style="left:83px;top:48px;line-height:16px">Intel(R) PRO/Wireless 3945ABG Network Connection</div>
<div class="a dh" style="left:51px;top:72px;width:10px"></div>
<div class="a" style="left:62px;top:64px;width:16px;height:16px"><svg width="16" height="16" viewBox="0 0 16 16"><path d="M0.5 2.5 H13 L15.5 4.5 V10.5 H0.5Z" fill="#2e8a2e" stroke="#0a3a0a"/><path d="M2 4h2v1.5h-2zM2 7h2v1.5h-2zM5 4h2v1.5h-2zM5 7h2v1.5h-2zM9 4h3v3h-3z" fill="#9ee09e"/><path d="M3 11.5h8" stroke="#c8b040" stroke-width="1.5"/><path d="M6 13h5" stroke="#111" stroke-width="1.5"/></svg></div>
<div class="t xp" style="left:83px;top:64px;line-height:16px">Realtek RTL8169/8110 Family Gigabit Ethernet NIC</div>
<div class="a dh" style="left:32px;top:88px;width:11px"></div>
<div class="a exb" style="left:28px;top:84px"><i></i></div>
<div class="a" style="left:43px;top:80px;width:16px;height:16px"><svg width="16" height="16" viewBox="0 0 16 16"><path d="M7.5 1.5 H15.5 L14.5 5 Q14.5 9 11.5 9 Q8.5 9 8.5 5Z" fill="#b8b8b0" stroke="#111"/><path d="M8.5 1.5 h6" stroke="#e8e040" stroke-dasharray="1 1"/><path d="M11.5 9 Q11 12 8 12 H3.5 Q1.5 12 1.5 14.5" fill="none" stroke="#111" stroke-width="2.6"/><path d="M11.5 9 Q11 12 8 12 H3.5 Q1.5 12 1.5 14.5" fill="none" stroke="#c0c0c0" stroke-width="1"/></svg></div>
<div class="t xp" style="left:63px;top:80px;line-height:16px">Ports (COM &amp; LPT)</div>
<div class="a dh" style="left:51px;top:104px;width:10px"></div>
<div class="a" style="left:62px;top:96px;width:16px;height:16px"><svg width="16" height="16" viewBox="0 0 16 16"><path d="M7.5 1.5 H15.5 L14.5 5 Q14.5 9 11.5 9 Q8.5 9 8.5 5Z" fill="#b8b8b0" stroke="#111"/><path d="M8.5 1.5 h6" stroke="#e8e040" stroke-dasharray="1 1"/><path d="M11.5 9 Q11 12 8 12 H3.5 Q1.5 12 1.5 14.5" fill="none" stroke="#111" stroke-width="2.6"/><path d="M11.5 9 Q11 12 8 12 H3.5 Q1.5 12 1.5 14.5" fill="none" stroke="#c0c0c0" stroke-width="1"/></svg></div>
<div class="t xp" style="left:83px;top:96px;line-height:16px">Toshiba BT Port (COM10)</div>
<div class="a dh" style="left:51px;top:120px;width:10px"></div>
<div class="a" style="left:62px;top:112px;width:16px;height:16px"><svg width="16" height="16" viewBox="0 0 16 16"><path d="M7.5 1.5 H15.5 L14.5 5 Q14.5 9 11.5 9 Q8.5 9 8.5 5Z" fill="#b8b8b0" stroke="#111"/><path d="M8.5 1.5 h6" stroke="#e8e040" stroke-dasharray="1 1"/><path d="M11.5 9 Q11 12 8 12 H3.5 Q1.5 12 1.5 14.5" fill="none" stroke="#111" stroke-width="2.6"/><path d="M11.5 9 Q11 12 8 12 H3.5 Q1.5 12 1.5 14.5" fill="none" stroke="#c0c0c0" stroke-width="1"/></svg></div>
<div class="t xp" style="left:83px;top:112px;line-height:16px">Toshiba BT Port (COM11)</div>
<div class="a dh" style="left:51px;top:136px;width:10px"></div>
<div class="a" style="left:62px;top:128px;width:16px;height:16px"><svg width="16" height="16" viewBox="0 0 16 16"><path d="M7.5 1.5 H15.5 L14.5 5 Q14.5 9 11.5 9 Q8.5 9 8.5 5Z" fill="#b8b8b0" stroke="#111"/><path d="M8.5 1.5 h6" stroke="#e8e040" stroke-dasharray="1 1"/><path d="M11.5 9 Q11 12 8 12 H3.5 Q1.5 12 1.5 14.5" fill="none" stroke="#111" stroke-width="2.6"/><path d="M11.5 9 Q11 12 8 12 H3.5 Q1.5 12 1.5 14.5" fill="none" stroke="#c0c0c0" stroke-width="1"/></svg></div>
<div class="t xp" style="left:83px;top:128px;line-height:16px">Toshiba BT Port (COM12)</div>
<div class="a dh" style="left:51px;top:152px;width:10px"></div>
<div class="a" style="left:62px;top:144px;width:16px;height:16px"><svg width="16" height="16" viewBox="0 0 16 16"><path d="M7.5 1.5 H15.5 L14.5 5 Q14.5 9 11.5 9 Q8.5 9 8.5 5Z" fill="#b8b8b0" stroke="#111"/><path d="M8.5 1.5 h6" stroke="#e8e040" stroke-dasharray="1 1"/><path d="M11.5 9 Q11 12 8 12 H3.5 Q1.5 12 1.5 14.5" fill="none" stroke="#111" stroke-width="2.6"/><path d="M11.5 9 Q11 12 8 12 H3.5 Q1.5 12 1.5 14.5" fill="none" stroke="#c0c0c0" stroke-width="1"/></svg></div>
<div class="t xp" style="left:83px;top:144px;line-height:16px">Toshiba BT Port (COM13)</div>
<div class="a dh" style="left:51px;top:168px;width:10px"></div>
<div class="a" style="left:62px;top:160px;width:16px;height:16px"><svg width="16" height="16" viewBox="0 0 16 16"><path d="M7.5 1.5 H15.5 L14.5 5 Q14.5 9 11.5 9 Q8.5 9 8.5 5Z" fill="#b8b8b0" stroke="#111"/><path d="M8.5 1.5 h6" stroke="#e8e040" stroke-dasharray="1 1"/><path d="M11.5 9 Q11 12 8 12 H3.5 Q1.5 12 1.5 14.5" fill="none" stroke="#111" stroke-width="2.6"/><path d="M11.5 9 Q11 12 8 12 H3.5 Q1.5 12 1.5 14.5" fill="none" stroke="#c0c0c0" stroke-width="1"/></svg></div>
<div class="t xp" style="left:83px;top:160px;line-height:16px">Toshiba BT Port (COM14)</div>
<div class="a dh" style="left:51px;top:184px;width:10px"></div>
<div class="a" style="left:62px;top:176px;width:16px;height:16px"><svg width="16" height="16" viewBox="0 0 16 16"><path d="M7.5 1.5 H15.5 L14.5 5 Q14.5 9 11.5 9 Q8.5 9 8.5 5Z" fill="#b8b8b0" stroke="#111"/><path d="M8.5 1.5 h6" stroke="#e8e040" stroke-dasharray="1 1"/><path d="M11.5 9 Q11 12 8 12 H3.5 Q1.5 12 1.5 14.5" fill="none" stroke="#111" stroke-width="2.6"/><path d="M11.5 9 Q11 12 8 12 H3.5 Q1.5 12 1.5 14.5" fill="none" stroke="#c0c0c0" stroke-width="1"/></svg></div>
<div class="t xp" style="left:83px;top:176px;line-height:16px">Toshiba BT Port (COM20)</div>
<div class="a dh" style="left:51px;top:200px;width:10px"></div>
<div class="a" style="left:62px;top:192px;width:16px;height:16px"><svg width="16" height="16" viewBox="0 0 16 16"><path d="M7.5 1.5 H15.5 L14.5 5 Q14.5 9 11.5 9 Q8.5 9 8.5 5Z" fill="#b8b8b0" stroke="#111"/><path d="M8.5 1.5 h6" stroke="#e8e040" stroke-dasharray="1 1"/><path d="M11.5 9 Q11 12 8 12 H3.5 Q1.5 12 1.5 14.5" fill="none" stroke="#111" stroke-width="2.6"/><path d="M11.5 9 Q11 12 8 12 H3.5 Q1.5 12 1.5 14.5" fill="none" stroke="#c0c0c0" stroke-width="1"/></svg></div>
<div class="t xp" style="left:83px;top:192px;line-height:16px">Toshiba BT Port (COM21)</div>
<div class="a dh" style="left:51px;top:216px;width:10px"></div>
<div class="a" style="left:62px;top:208px;width:16px;height:16px"><svg width="16" height="16" viewBox="0 0 16 16"><path d="M7.5 1.5 H15.5 L14.5 5 Q14.5 9 11.5 9 Q8.5 9 8.5 5Z" fill="#b8b8b0" stroke="#111"/><path d="M8.5 1.5 h6" stroke="#e8e040" stroke-dasharray="1 1"/><path d="M11.5 9 Q11 12 8 12 H3.5 Q1.5 12 1.5 14.5" fill="none" stroke="#111" stroke-width="2.6"/><path d="M11.5 9 Q11 12 8 12 H3.5 Q1.5 12 1.5 14.5" fill="none" stroke="#c0c0c0" stroke-width="1"/></svg></div>
<div class="t xp" style="left:83px;top:208px;line-height:16px">Toshiba BT Port (COM40)</div>
<div class="a dh" style="left:51px;top:232px;width:10px"></div>
<div class="a" style="left:62px;top:224px;width:16px;height:16px"><svg width="16" height="16" viewBox="0 0 16 16"><path d="M7.5 1.5 H15.5 L14.5 5 Q14.5 9 11.5 9 Q8.5 9 8.5 5Z" fill="#b8b8b0" stroke="#111"/><path d="M8.5 1.5 h6" stroke="#e8e040" stroke-dasharray="1 1"/><path d="M11.5 9 Q11 12 8 12 H3.5 Q1.5 12 1.5 14.5" fill="none" stroke="#111" stroke-width="2.6"/><path d="M11.5 9 Q11 12 8 12 H3.5 Q1.5 12 1.5 14.5" fill="none" stroke="#c0c0c0" stroke-width="1"/></svg></div>
<div class="t xp" style="left:83px;top:224px;line-height:16px">Toshiba BT Port (COM6)</div>
<div class="a dh" style="left:51px;top:248px;width:10px"></div>
<div class="a" style="left:62px;top:240px;width:16px;height:16px"><svg width="16" height="16" viewBox="0 0 16 16"><path d="M7.5 1.5 H15.5 L14.5 5 Q14.5 9 11.5 9 Q8.5 9 8.5 5Z" fill="#b8b8b0" stroke="#111"/><path d="M8.5 1.5 h6" stroke="#e8e040" stroke-dasharray="1 1"/><path d="M11.5 9 Q11 12 8 12 H3.5 Q1.5 12 1.5 14.5" fill="none" stroke="#111" stroke-width="2.6"/><path d="M11.5 9 Q11 12 8 12 H3.5 Q1.5 12 1.5 14.5" fill="none" stroke="#c0c0c0" stroke-width="1"/></svg></div>
<div class="t xp" style="left:83px;top:240px;line-height:16px">Toshiba BT Port (COM7)</div>
<div class="a dh" style="left:32px;top:264px;width:11px"></div>
<div class="a exb" style="left:28px;top:260px"><i></i><b></b></div>
<div class="a" style="left:43px;top:256px;width:16px;height:16px"><svg width="16" height="16" viewBox="0 0 16 16"><path d="M1 5 L4 3 H15 L13 5Z" fill="#666"/><rect x="1" y="5" width="12" height="6" fill="#111"/><path d="M13 5 L15 3 V9 L13 11Z" fill="#333"/><path d="M2.5 11v3M4.5 11v3M6.5 11v3M8.5 11v3M10.5 11v3M12.5 11v3M4.5 1v2M6.5 1v2M8.5 1v2M10.5 1v2M12.5 1v2M14.5 1v2" stroke="#111"/><path d="M3 7.5h8M3 9.5h8" stroke="#555" stroke-dasharray="1 1"/></svg></div>
<div class="t xp" style="left:63px;top:256px;line-height:16px">Processors</div>
<div class="a dh" style="left:32px;top:280px;width:11px"></div>
<div class="a exb" style="left:28px;top:276px"><i></i><b></b></div>
<div class="a" style="left:43px;top:272px;width:16px;height:16px"><svg width="16" height="16" viewBox="0 0 16 16"><path d="M7.5 1.5 L1 8 L7.5 14.5 L10 12 L5.5 8 L10 4Z" fill="#f4f4f4" stroke="#111" stroke-width="1.2"/><rect x="6.5" y="6.5" width="8" height="3" fill="#8a8a8a" stroke="#111"/></svg></div>
<div class="t xp" style="left:63px;top:272px;line-height:16px">SCSI and RAID controllers</div>
<div class="a dh" style="left:32px;top:296px;width:11px"></div>
<div class="a exb" style="left:28px;top:292px"><i></i><b></b></div>
<div class="a" style="left:43px;top:288px;width:16px;height:16px"><svg width="16" height="16" viewBox="0 0 16 16"><ellipse cx="6.5" cy="7" rx="5.5" ry="6" fill="#6a6a6a" stroke="#444"/><ellipse cx="6" cy="6.5" rx="3" ry="3.5" fill="#a8a8a8"/><ellipse cx="6" cy="6.5" rx="1.2" ry="1.4" fill="#333"/><path d="M10 13 q3 -1 4 -5 M9 15 q5 -1 6 -7" fill="none" stroke="#98b0e0" stroke-width="1.2"/></svg></div>
<div class="t xp" style="left:63px;top:288px;line-height:16px">Sound, video and game controllers</div>
<div class="a dh" style="left:32px;top:312px;width:11px"></div>
<div class="a exb" style="left:28px;top:308px"><i></i><b></b></div>
<div class="a" style="left:43px;top:304px;width:16px;height:16px"><svg width="16" height="16" viewBox="0 0 16 16"><path d="M5 0.5 H12 Q13.5 0.5 13.5 2 V11 H4 V2Z" fill="#58a8f0" stroke="#3070b8"/><path d="M6 2h5v6h-5z" fill="#a8dcff"/><ellipse cx="8.5" cy="13" rx="5" ry="2.5" fill="#b0b0d0" stroke="#707090"/></svg></div>
<div class="t xp" style="left:63px;top:304px;line-height:16px">System devices</div>
<div class="a dh" style="left:32px;top:328px;width:11px"></div>
<div class="a exb" style="left:28px;top:324px"><i></i><b></b></div>
<div class="a" style="left:43px;top:320px;width:16px;height:16px"><svg width="16" height="16" viewBox="0 0 16 16"><path d="M2 8 H13" stroke="#111" stroke-width="1.6"/><path d="M11 4.5 L15 8 L11 11.5" fill="none" stroke="#111" stroke-width="1.6"/><path d="M5 8 L8 3 H9 M6 8 L9 13 H10" fill="none" stroke="#111" stroke-width="1.3"/><rect x="0.5" y="6" width="5" height="4" fill="#888" stroke="#111"/><circle cx="9.5" cy="2.5" r="1.8" fill="#fff" stroke="#111"/><rect x="9.5" y="11.5" width="3" height="3" fill="#fff" stroke="#111"/></svg></div>
<div class="t xp" style="left:63px;top:320px;line-height:16px">Universal Serial Bus controllers</div></div><!--/tree-->
 <!-- status -->
 <div class="a" style="left:3px;top:423px;width:633px;height:1px;background:#a8a8b0"></div>
 <div class="a" style="left:3px;top:424px;width:633px;height:22px;background:linear-gradient(#ececf0,#dedee4)"></div>
</div>

<!-- ============ PROPERTIES DIALOG ============ -->
<div class="a" id="dlg" style="left:799px;top:201px;width:429px;height:453px;border:1px solid #6a6a78;border-radius:7px 7px 0 0;background:#e4e4e8;overflow:hidden">
 <div class="a" style="left:0;top:0;width:427px;height:27px;background:linear-gradient(#ffffff,#e4e4f0 5%,#a4a6bc 14%,#aeb0c4 28%,#babccc 48%,#d8dade 66%,#f4f6f6 80%,#ffffff 92%,#e4e4ea)"></div>
 <div class="t b" style="left:6px;top:7px;font-size:13px;color:#000;letter-spacing:-.1px;white-space:pre">Toshiba BT Port (COM40)  - vlastnosti</div>
 <div class="a tb hp" style="left:380px;top:3px"><div class="t b" style="left:5px;top:3px;font-size:14px;color:#222">?</div></div>
 <div class="a tb cl2" style="left:403px;top:3px"><svg class="a" style="left:3px;top:3px" width="13" height="13"><path d="M2 2 L11 11 M11 2 L2 11" stroke="#fff" stroke-width="2.2"/></svg></div>
 <!-- frame lines -->
 <div class="a" style="left:0;top:26px;width:427px;height:1px;background:#70707e"></div>
 <div class="a" style="left:3px;top:28px;width:421px;height:421px;background:linear-gradient(#e2e2e8,#ececef 15%,#ececf0)"></div>
 <!-- tabs -->
 <div class="a tab" style="left:61px;top:37px;width:51px;height:19px"></div>
 <div class="t xp" style="left:66px;top:40px">Ovladač</div>
 <div class="a tab" style="left:112px;top:37px;width:66px;height:19px"></div>
 <div class="t xp" style="left:118px;top:40px">Podrobnosti</div>
 <div class="a" style="left:8px;top:54px;width:411px;height:357px;border:1px solid #9898a8;background:linear-gradient(#fcfcfe,#f6f6f8)"></div>
 <div class="a" style="left:8px;top:35px;width:53px;height:22px;border:1px solid #9898a8;border-bottom:0;border-radius:3px 3px 0 0;background:#fcfcfe"></div>
 <div class="a" style="left:8px;top:35px;width:53px;height:3px;border-radius:3px 3px 0 0;background:linear-gradient(#e8a030,#f8c868)"></div>
 <div class="t xp" style="left:16px;top:38px">Obecné</div>
 <!-- big icon -->
 <svg class="a" style="left:21px;top:65px" width="34" height="38" viewBox="0 0 34 38">
  <path d="M21 18 V24 Q21 28 17 28 H9 Q5 28 5 32 V36" fill="none" stroke="#111" stroke-width="5.5"/>
  <path d="M21 18 V24 Q21 28 17 28 H9 Q5 28 5 32 V36" fill="none" stroke="#b4b4b4" stroke-width="3"/>
  <path d="M12.5 7.5 H30.5 V11 L28.5 19 Q21 22 14.5 19 L12.5 11Z" fill="#a8a8a4" stroke="#111" stroke-width="1.2"/>
  <path d="M11.5 5.5 Q11.5 3.5 13.5 3.5 H29.5 Q31.5 3.5 31.5 5.5 V8.5 H11.5Z" fill="#c8c8c4" stroke="#111" stroke-width="1.2"/>
  <path d="M14 3.5 h16" stroke="#f0e860" stroke-width="1.6" stroke-dasharray="1.6 1.6"/>
  <path d="M16 11 h11 l-1.5 6 q-4 2 -8 0z" fill="#c0c0bc"/>
 </svg>
 <div class="t xp" style="left:68px;top:73px">Toshiba BT Port (COM40)</div>
 <div class="t xp" style="left:68px;top:108px">Typ zařízení:</div>
 <div class="t xp" style="left:141px;top:108px">Ports (COM &amp; LPT)</div>
 <div class="t xp" style="left:68px;top:131px">Výrobce:</div>
 <div class="t xp" style="left:141px;top:131px">Toshiba</div>
 <div class="t xp" style="left:68px;top:154px">Umístění:</div>
 <div class="t xp" style="left:141px;top:154px">připojené k Bluetooth RFCOMM from TOSHIBA</div>
 <!-- group -->
 <div class="a" style="left:22px;top:198px;width:357px;height:157px;border:1px solid #d0d0bf;border-radius:4px"></div>
 <div class="t xp" style="left:29px;top:193px;color:#1e4aa8;background:#fafafc;padding:0 2px">Stav zařízení</div>
 <div class="a" style="left:32px;top:213px;width:337px;height:100px;border:1px solid #a8a8a8;background:#f6f6f6"></div>
 <div class="a" style="left:350px;top:214px;width:18px;height:98px;background:linear-gradient(90deg,#f4f4f2,#fbfbfa 50%,#f0f0ee)"></div>
 <div class="a" style="left:351px;top:215px;width:16px;height:17px;border:1px solid #e8e8e0;border-radius:2px;background:#eeeeea"><svg class="a" style="left:3px;top:4px" width="10" height="7"><path d="M1 6 L5 2 L9 6" fill="none" stroke="#c4c4b8" stroke-width="2"/></svg></div>
 <div class="a" style="left:351px;top:294px;width:16px;height:17px;border:1px solid #e8e8e0;border-radius:2px;background:#eeeeea"><svg class="a" style="left:3px;top:5px" width="10" height="7"><path d="M1 1 L5 5 L9 1" fill="none" stroke="#c4c4b8" stroke-width="2"/></svg></div>
 <div class="t xp" style="left:36px;top:216px">Toto zařízení pracuje správně.</div>
 <div class="t xp" style="left:36px;top:242px">Pokud máte s tímto zařízením problémy, spusťte poradce při</div>
 <div class="t xp" style="left:36px;top:255px">potížích klepnutím na tlačítko Poradce při potížích.</div>
 <div class="a btn def" style="left:235px;top:322px;width:133px;height:22px"><span>Poradce při potížích...</span></div>
 <div class="t xp" style="left:23px;top:364px">Využití zařízení:</div>
 <div class="a" style="left:22px;top:378px;width:360px;height:21px;border:1px solid #8a8aa0;background:#fff"></div>
 <div class="t xp" style="left:26px;top:383px">Používat toto zařízení (povolit)</div>
 <div class="a" style="left:363px;top:380px;width:17px;height:17px;border:1px solid #b0b0c0;border-radius:2px;background:linear-gradient(#f4f4f8,#d8d8e0)"><svg class="a" style="left:3px;top:5px" width="10" height="7"><path d="M1 1 L5 5 L9 1" fill="none" stroke="#333" stroke-width="2"/></svg></div>
 <div class="a btn" style="left:265px;top:421px;width:73px;height:21px"><span>OK</span></div>
 <div class="a btn" style="left:346px;top:421px;width:73px;height:21px"><span>Storno</span></div>
</div>
</body></html>
